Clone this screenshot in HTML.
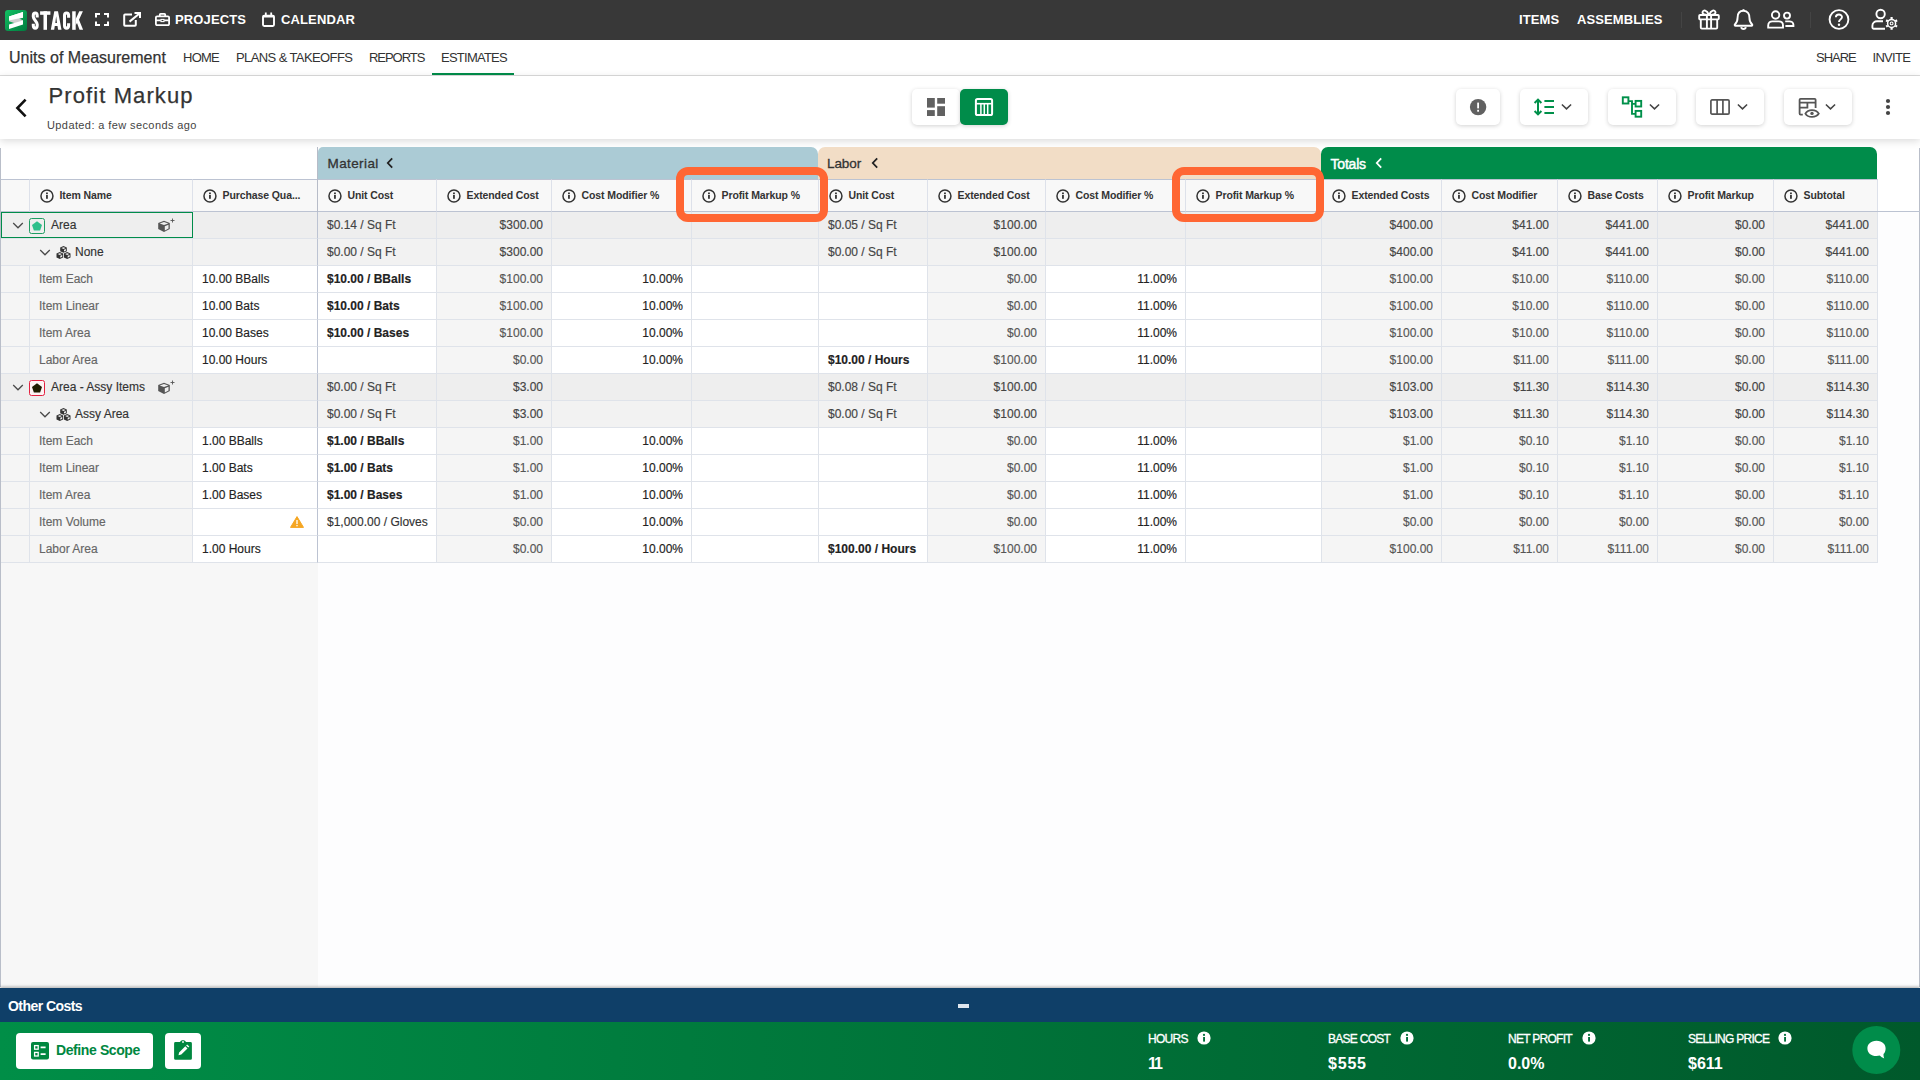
<!DOCTYPE html>
<html lang="en"><head><meta charset="utf-8"><title>Profit Markup - STACK</title>
<style>
*{box-sizing:border-box;margin:0;padding:0}
html,body{width:1920px;height:1080px;overflow:hidden;background:#fff}
body{font-family:"Liberation Sans",sans-serif;color:#333;position:relative;font-size:12px}
svg{display:block}
.abs{position:absolute}
/* top bar */
#topbar{position:absolute;left:0;top:0;width:1920px;height:40px;background:#383838;color:#fff}
#topbar .t{position:absolute;top:12px;font-size:13px;font-weight:700;letter-spacing:.13px;line-height:16px;white-space:nowrap}
#topbar svg{position:absolute}
#topbar .sep{position:absolute;top:12px;width:1px;height:16px;background:#444}
/* sub nav */
#subnav{position:absolute;left:0;top:40px;width:1920px;height:36px;background:#fff;border-bottom:1px solid #dcdcdc}
#subnav span{position:absolute;white-space:nowrap;color:#333}
#subnav .proj{left:9px;top:8px;font-size:16px;line-height:20px;color:#333;-webkit-text-stroke:.25px #333;letter-spacing:.02px}
#subnav .n{top:10px;font-size:13px;line-height:16px;letter-spacing:-.75px}
#subnav .ul{position:absolute;left:432px;top:33px;width:82px;height:2px;background:#008c4a}
/* title bar */
#titlebar{position:absolute;left:0;top:76px;width:1920px;height:63px;background:#fff;box-shadow:0 2px 8px rgba(0,0,0,.15)}
#titlebar .title{position:absolute;left:48.5px;top:6.2px;font-size:22px;line-height:28px;letter-spacing:1.1px;-webkit-text-stroke:.25px #333;color:#333;white-space:nowrap}
#titlebar .upd{position:absolute;left:47px;top:42px;font-size:11px;line-height:14px;letter-spacing:.4px;color:#444;white-space:nowrap}
#titlebar svg{position:absolute}
.tbtn{position:absolute;top:13px;height:36px;background:#fff;border-radius:5px;box-shadow:0 1px 4px rgba(0,0,0,.18)}
.tbtn.on{background:#008c4a}
/* grid */
#grid{position:absolute;left:0;top:0;width:1920px;height:988px;z-index:0}
.leftpane{position:absolute;left:1px;top:563px;width:317px;height:424px;background:#f7f7f7}
.lborder{position:absolute;left:0;top:148px;width:1px;height:839px;background:#b9bec9}
.rborder{position:absolute;left:1919px;top:148px;width:1px;height:839px;background:#b9bec9}
.rpane{position:absolute;left:318px;top:212px;width:1601px;height:775px;background:#fdfdfe}
.gh{position:absolute;top:147px;height:33px;border-radius:7px 7px 0 0;font-size:13.5px}
.pinline{position:absolute;left:317px;top:147px;width:1px;height:415px;background:#b7bcc8}
.gh.mat{background:#abcbd5;border-top-left-radius:5px}
.gh.lab{background:#f2ddc6}
.gh.tot{background:#008c4a;color:#fff}
.gh .ght{position:absolute;left:9.5px;top:9px;line-height:16px;letter-spacing:.4px;-webkit-text-stroke:.3px #333}
.gh.tot .ght{-webkit-text-stroke:.45px #fff;letter-spacing:-.2px;font-size:14px}
.gh .chl{position:absolute;top:10px}
.gh.mat .chl{left:68px}.gh.lab .chl{left:53px}.gh.tot .chl{left:54px}
.gh.lab .ght{letter-spacing:-.1px;left:9px}
.hrow{position:absolute;left:0;top:179px;width:1878px;height:33px;}
.hc{position:absolute;top:0;height:33px;background:#f8f8f8;border-top:1px solid #bcc3d2;border-bottom:1px solid #bcc3d2;border-right:1px solid #dde1ea}
.hc.thick{border-right:1px solid #bcc3d2}
.hc .info{position:absolute;left:9px;top:8px}
.hc .ht{position:absolute;left:29.5px;top:8px;font-size:10.5px;font-weight:700;line-height:14px;white-space:nowrap;color:#333;letter-spacing:-.1px}
.hline{position:absolute;left:1877px;top:211px;width:43px;height:1px;background:#bcc3d2}
.row{position:absolute;left:0;width:1878px;height:27px}
.c{-webkit-text-stroke:.15px currentColor;position:absolute;top:0;height:27px;border-bottom:1px solid #dfe3ea;border-right:1px solid #dfe3ea;background:#fff;font-size:12px;line-height:27px;white-space:nowrap;color:#555}
.c.thick{border-right:1px solid #bcc3d2}
.c .l{position:absolute;left:9px;top:0}
.c .r{position:absolute;right:8px;top:0}
.c .b{font-weight:700;color:#222}
.c .d{color:#333}
.g1 .c{background:#eeeeee;color:#444}
.g2 .c{background:#f2f2f2;color:#444}
.it .c0,.it .c1,.it .c4,.it .c8{background:#f5f5f5}
.it .c2 .l,.it .c5 .r,.it .c9 .r{color:#222}
.it .c11,.it .c12,.it .c13,.it .c14,.it .c15{background:#f5f5f5}
.c1 .nm{position:absolute;top:0;color:#333;font-size:12px}
.namei .nm{color:#666}
.name1,.name2{border-right:1px solid #dfe3ea}
.chd,.ai,.cp,.cb{position:absolute}
.warn{position:absolute;right:13px;top:7px}
.sel{position:absolute;left:1px;top:212px;width:192px;height:26px;border:1px solid #008c4a}
.hl{position:absolute;border:8px solid #ff6633;border-radius:12px}
/* other costs */
#other{position:absolute;left:0;top:988px;width:1920px;height:34px;background:#0f3f68;box-shadow:0 -1px 3px rgba(0,0,0,.35)}
#other .t{position:absolute;left:8px;top:10px;font-size:14px;font-weight:700;line-height:16px;color:#fff;letter-spacing:-.55px}
#other .eq{position:absolute;left:958px;top:16px;width:11px;height:4px;background:linear-gradient(#dfe6ee 0 38%,rgba(255,255,255,.15) 38% 62%,#dfe6ee 62%)}
/* footer */
#footer{position:absolute;left:0;top:1022px;width:1920px;height:58px;background:linear-gradient(90deg,#008e47 0%,#00592b 100%);color:#fff}
#footer .btn{position:absolute;top:11px;height:36px;background:#fff;border-radius:4px}
#footer .lab{position:absolute;top:10px;font-size:12px;line-height:14px;white-space:nowrap;letter-spacing:-.72px;-webkit-text-stroke:.3px #fff}
#footer .val{position:absolute;top:33px;font-size:16px;font-weight:700;line-height:18px;white-space:nowrap}
#footer svg{position:absolute}

</style></head>
<body>
<div id="topbar">
<svg style="left:0;top:0" width="90" height="40" viewBox="0 0 90 40"><defs><linearGradient id="lg" x1="0" y1="0" x2="1" y2="1"><stop offset="0" stop-color="#12c163"/><stop offset="1" stop-color="#007a3e"/></linearGradient></defs><rect x="5" y="10" width="22" height="21" rx="3" fill="url(#lg)"/><path d="M9 16.6 L23 12.1 L23 17.8 L9 21 Z" fill="#fff"/><path d="M9 19.4 L16.5 17.6 L23 20.2 L23 22 L15.5 23.6 L9 21.2 Z" fill="#cfcfcf"/><path d="M9 16.6 L23 12.1 L23 17.4 L9 20.4 Z" fill="#fff"/><path d="M9 24.6 L23 20.6 L23 24.4 L9 28.9 Z" fill="#fff"/><g fill="#fff"><rect x="40.1" y="11.3" width="10.3" height="3.5"/><rect x="43.5" y="11.3" width="3.5" height="18.5"/><path fill-rule="evenodd" d="M50.8 29.8 L54.3 11.3 L58 11.3 L61.5 29.8 L58.1 29.8 L57.5 26 L54.8 26 L54.2 29.8 Z M55.3 23 L57 23 L56.15 16.2 Z"/><rect x="72.2" y="11.3" width="3.5" height="18.5"/><path d="M75.7 19 L79.3 11.3 L82.9 11.3 L79 19.7 L83.1 29.8 L79.5 29.8 L77 23 L75.7 25.2 Z"/></g><g fill="none" stroke="#fff" stroke-width="3.05"><path d="M37.2 17.4 V15.6 C37.2 12.1 33.3 12.1 33.3 15.6 V16.8 C33.3 19.6 37.2 21.4 37.2 24.3 V25.5 C37.2 29 33.3 29 33.3 25.5 V23.7"/><path d="M68.6 17.8 V15.6 C68.6 12.1 64.5 12.1 64.5 15.6 V25.5 C64.5 29 68.6 29 68.6 25.5 V23.2"/></g></svg>
<svg style="left:95px;top:13px" width="14" height="13" viewBox="0 0 14 13" fill="none" stroke="#fff" stroke-width="2"><path d="M1 4.5 V1 H5 M9 1 H13 V4.5 M13 8.5 V12 H9 M5 12 H1 V8.5"/></svg>
<svg style="left:123px;top:12px" width="19" height="15" viewBox="0 0 19 15" fill="none" stroke="#fff" stroke-width="2"><path d="M9 2.6 H2 Q1.2 2.6 1.2 3.4 V13 Q1.2 13.8 2 13.8 H12 Q12.8 13.8 12.8 13 V8"/><path d="M6.5 9.6 L16.5 1.5"/><path d="M11.5 1 H17 V6" stroke-linejoin="miter"/></svg>
<svg style="left:155px;top:13px" width="15" height="13" viewBox="0 0 15 13" fill="none" stroke="#fff" stroke-width="1.8"><rect x="0.9" y="3.3" width="13.2" height="8.9" rx="1.2"/><path d="M4.8 3.3 V1.6 Q4.8 0.9 5.5 0.9 H9.5 Q10.2 0.9 10.2 1.6 V3.3"/><path d="M0.9 7.4 H5.8 M9.2 7.4 H14.1"/><rect x="6" y="6.4" width="3" height="2.2" stroke-width="1.1"/></svg>
<span class="t" style="left:175px">PROJECTS</span>
<svg style="left:262px;top:12px" width="13" height="15" viewBox="0 0 13 15" fill="none" stroke="#fff" stroke-width="1.9"><rect x="1" y="3.6" width="11" height="10.4" rx="1.2"/><path d="M3.8 0.6 V4.4 M9.2 0.6 V4.4" stroke-width="1.8"/><path d="M1 4.4 H12" stroke-width="2.2"/></svg>
<span class="t" style="left:281px">CALENDAR</span>
<span class="t" style="left:1519px">ITEMS</span>
<span class="t" style="left:1577px;letter-spacing:.1px">ASSEMBLIES</span>
<div class="sep" style="left:1681px"></div>
<svg style="left:1698px;top:9px" width="22" height="21" viewBox="0 0 22 21" fill="none" stroke="#fff" stroke-width="1.9"><rect x="1.2" y="6" width="19.6" height="4.4" rx="0.8"/><path d="M2.8 10.4 V18.6 Q2.8 19.6 3.8 19.6 H18.2 Q19.2 19.6 19.2 18.6 V10.4"/><path d="M8.9 6 V19.6 M13.1 6 V19.6"/><path d="M10.8 5.8 C9 1 5.2 0.6 4.6 3 C4 5.2 7 6 10.8 5.8 Z M11.2 5.8 C13 1 16.8 0.6 17.4 3 C18 5.2 15 6 11.2 5.8 Z"/></svg>
<svg style="left:1733px;top:8px" width="21" height="23" viewBox="0 0 21 23" fill="none" stroke="#fff" stroke-width="1.9"><path d="M10.5 1.2 V2.8"/><path d="M10.5 2.8 C6 2.8 4.6 6.4 4.6 9.6 C4.6 13.4 3.4 15 2 16.2 C1.4 16.8 1.6 17.8 2.6 17.8 H18.4 C19.4 17.8 19.6 16.8 19 16.2 C17.6 15 16.4 13.4 16.4 9.6 C16.4 6.4 15 2.8 10.5 2.8 Z"/><path d="M8.2 19.2 C8.6 21.6 12.4 21.6 12.8 19.2"/></svg>
<svg style="left:1767px;top:10px" width="28" height="19" viewBox="0 0 28 19" fill="none" stroke="#fff" stroke-width="1.9"><circle cx="8.6" cy="5" r="3.7"/><path d="M1.2 17.6 V15.4 C1.2 12.6 3.4 11.4 5.4 11.4 H11.8 C13.8 11.4 16 12.6 16 15.4 V17.6 Z"/><circle cx="20" cy="5.6" r="3"/><path d="M18.2 11.4 H22.4 C24.4 11.4 26.4 12.6 26.4 14.8 V16 H18.4"/></svg>
<div class="sep" style="left:1810px"></div>
<svg style="left:1828px;top:9px" width="22" height="22" viewBox="0 0 22 22" fill="none" stroke="#fff" stroke-width="1.9"><circle cx="11" cy="10.5" r="9.4"/><path d="M7.9 8.2 C7.9 4.6 14 4.6 14 8.1 C14 10.4 11 10.4 11 13" stroke-width="1.9"/><circle cx="11" cy="15.8" r="1.2" fill="#fff" stroke="none"/></svg>
<svg style="left:1871px;top:8px" width="29" height="24" viewBox="0 0 29 24" fill="none" stroke="#fff" stroke-width="1.9"><circle cx="9.6" cy="6" r="4.2"/><path d="M14 20.8 H2.6 Q1.4 20.8 1.4 19.6 V17.8 C1.4 14.8 3.8 13.2 6 13.2 H12"/><circle cx="20.6" cy="15.4" r="4" stroke-width="1.5"/><circle cx="20.6" cy="15.4" r="1.4" stroke-width="1.1"/><g stroke-width="2.2" stroke-linecap="butt"><path d="M20.6 9 V11 M20.6 19.8 V21.8 M15.1 12.2 L16.8 13.2 M24.4 17.6 L26.1 18.6 M15.1 18.6 L16.8 17.6 M24.4 13.2 L26.1 12.2"/></g></svg>
</div>
<div id="subnav">
<span class="proj">Units of Measurement</span>
<span class="n" style="left:183px">HOME</span>
<span class="n" style="left:236px;letter-spacing:-.6px">PLANS &amp; TAKEOFFS</span>
<span class="n" style="left:369px;letter-spacing:-1.05px">REPORTS</span>
<span class="n" style="left:441px">ESTIMATES</span>
<div class="ul"></div>
<span class="n" style="left:1816px;letter-spacing:-1px">SHARE</span>
<span class="n" style="left:1872.5px;letter-spacing:-.7px">INVITE</span>
</div>
<div id="titlebar">
<svg style="left:14px;top:22px" width="14" height="20" viewBox="0 0 14 20" fill="none" stroke="#111" stroke-width="2.6"><path d="M11.6 1.6 L3.4 10 L11.6 18.4"/></svg>
<div class="title">Profit Markup</div>
<div class="upd">Updated: a few seconds ago</div>
<div class="tbtn" style="left:912px;width:48px"><svg style="position:absolute;left:15px;top:9px" width="18" height="18" viewBox="0 0 18 18" fill="#616161"><rect x="0" y="0" width="7.8" height="9.6"/><rect x="10.2" y="0" width="7.8" height="5.7"/><rect x="0" y="12.1" width="7.8" height="5.9"/><rect x="10.2" y="8.2" width="7.8" height="9.8"/></svg></div>
<div class="tbtn on" style="left:960px;width:48px"><svg style="position:absolute;left:14px;top:8px" width="20" height="20" viewBox="0 0 20 20" fill="none" stroke="#fff"><rect x="1.9" y="1.9" width="16.2" height="16.2" rx="1.6" stroke-width="2"/><path d="M2 6.7 H18" stroke-width="1.6"/><path d="M6.9 6.7 V18 M10.3 6.7 V18 M13.7 6.7 V18" stroke-width="1.5"/></svg></div>
<div class="tbtn" style="left:1456px;width:44px"><svg style="position:absolute;left:13px;top:9px" width="18" height="18" viewBox="-0.6 -0.6 18 18"><circle cx="8.5" cy="8.5" r="8.2" fill="#616161"/><rect x="7.6" y="4" width="1.8" height="5.8" fill="#fff"/><rect x="7.6" y="11.2" width="1.8" height="1.9" fill="#fff"/></svg></div>
<div class="tbtn" style="left:1520px;width:68px"><svg style="position:absolute;left:13px;top:9px" width="22" height="18" viewBox="0 0 22 18" fill="none" stroke="#00904a" stroke-width="2"><path d="M5 2 V16"/><path d="M1.6 5 L5 1.6 L8.4 5 M1.6 13 L5 16.4 L8.4 13"/><path d="M11.4 3 H21 M11.4 9 H21 M11.4 15 H21" stroke-width="1.9"/></svg><svg style="position:absolute;left:41px;top:14px" width="11" height="8" viewBox="0 -0.6 11 8" fill="none" stroke="#444" stroke-width="1.5"><path d="M0.9 0.9 L5.5 5.3 L10.1 0.9"/></svg></div>
<div class="tbtn" style="left:1608px;width:68px"><svg style="position:absolute;left:13px;top:6px" width="22" height="25" viewBox="0 -0.5 22 25" fill="none" stroke="#00904a" stroke-width="1.9"><rect x="1.8" y="1.8" width="5.6" height="6.2"/><rect x="14.6" y="5.4" width="5.6" height="5.6"/><rect x="14.6" y="15.4" width="5.6" height="5.8"/><path d="M7.4 5.6 H11 V18.4 H14.6 M11 8.4 H14.6"/></svg><svg style="position:absolute;left:41px;top:14px" width="11" height="8" viewBox="0 -0.6 11 8" fill="none" stroke="#444" stroke-width="1.5"><path d="M0.9 0.9 L5.5 5.3 L10.1 0.9"/></svg></div>
<div class="tbtn" style="left:1696px;width:68px"><svg style="position:absolute;left:13px;top:9px" width="22" height="18" viewBox="0 0 22 18" fill="none" stroke="#555" stroke-width="1.7"><rect x="1.9" y="1.9" width="18.2" height="14.2" rx="1.2"/><path d="M8.1 2 V16 M13.9 2 V16"/></svg><svg style="position:absolute;left:41px;top:14px" width="11" height="8" viewBox="0 -0.6 11 8" fill="none" stroke="#444" stroke-width="1.5"><path d="M0.9 0.9 L5.5 5.3 L10.1 0.9"/></svg></div>
<div class="tbtn" style="left:1784px;width:68px"><svg style="position:absolute;left:14px;top:8px" width="22" height="22" viewBox="0 0 22 22" fill="none" stroke="#555" stroke-width="1.8"><path d="M4.8 17.6 H2.6 Q1.6 17.6 1.6 16.6 V2.8 Q1.6 1.8 2.6 1.8 H16.6 Q17.6 1.8 17.6 2.8 V11"/><path d="M1.6 5.6 H17.6 M1.6 10.6 H9.4 M9.4 5.6 V11.4"/><path d="M7.4 16.6 C10 12 18 12 20.8 16.6 C18 21 10 21 7.4 16.6 Z" fill="#fff"/><circle cx="14" cy="16.4" r="1.7" fill="#555" stroke="none"/></svg><svg style="position:absolute;left:41px;top:14px" width="11" height="8" viewBox="0 -0.6 11 8" fill="none" stroke="#444" stroke-width="1.5"><path d="M0.9 0.9 L5.5 5.3 L10.1 0.9"/></svg></div>
<svg style="left:1884px;top:22px" width="8" height="18" viewBox="0 0 8 18" fill="#444"><circle cx="4" cy="3" r="2.1"/><circle cx="4" cy="9" r="2.1"/><circle cx="4" cy="15" r="2.1"/></svg>
</div>

<div id="grid">
<div class="leftpane"></div>
<div class="rpane"></div>
<div class="lborder"></div><div class="rborder"></div>
<div class="gh mat" style="left:318px;width:500px"><span class="ght">Material</span><svg class="chl" width="8" height="12" viewBox="0 0 8 12"><path d="M6.2 1.4 L1.8 6 L6.2 10.6" fill="none" stroke="#222" stroke-width="1.8"/></svg></div>
<div class="gh lab" style="left:818px;width:503px"><span class="ght">Labor</span><svg class="chl" width="8" height="12" viewBox="0 0 8 12"><path d="M6.2 1.4 L1.8 6 L6.2 10.6" fill="none" stroke="#222" stroke-width="1.8"/></svg></div>
<div class="gh tot" style="left:1321px;width:556px"><span class="ght">Totals</span><svg class="chl" width="8" height="12" viewBox="0 0 8 12"><path d="M6.2 1.4 L1.8 6 L6.2 10.6" fill="none" stroke="#fff" stroke-width="1.8"/></svg></div>
<div class="hrow">
<div class="hc" style="left:1px;width:29px"></div>
<div class="hc" style="left:30px;width:163px"><svg class="info" width="16" height="16" viewBox="-0.45 -0.5 16 16"><circle cx="7.5" cy="7.5" r="6" fill="none" stroke="#333" stroke-width="1.5"/><rect x="6.6" y="6.3" width="1.8" height="4" fill="#333"/><rect x="6.6" y="4" width="1.8" height="1.5" fill="#333"/></svg><span class="ht">Item Name</span></div>
<div class="hc thick" style="left:193px;width:125px"><svg class="info" width="16" height="16" viewBox="-0.45 -0.5 16 16"><circle cx="7.5" cy="7.5" r="6" fill="none" stroke="#333" stroke-width="1.5"/><rect x="6.6" y="6.3" width="1.8" height="4" fill="#333"/><rect x="6.6" y="4" width="1.8" height="1.5" fill="#333"/></svg><span class="ht">Purchase Qua...</span></div>
<div class="hc" style="left:318px;width:119px"><svg class="info" width="16" height="16" viewBox="-0.45 -0.5 16 16"><circle cx="7.5" cy="7.5" r="6" fill="none" stroke="#333" stroke-width="1.5"/><rect x="6.6" y="6.3" width="1.8" height="4" fill="#333"/><rect x="6.6" y="4" width="1.8" height="1.5" fill="#333"/></svg><span class="ht">Unit Cost</span></div>
<div class="hc" style="left:437px;width:115px"><svg class="info" width="16" height="16" viewBox="-0.45 -0.5 16 16"><circle cx="7.5" cy="7.5" r="6" fill="none" stroke="#333" stroke-width="1.5"/><rect x="6.6" y="6.3" width="1.8" height="4" fill="#333"/><rect x="6.6" y="4" width="1.8" height="1.5" fill="#333"/></svg><span class="ht">Extended Cost</span></div>
<div class="hc" style="left:552px;width:140px"><svg class="info" width="16" height="16" viewBox="-0.45 -0.5 16 16"><circle cx="7.5" cy="7.5" r="6" fill="none" stroke="#333" stroke-width="1.5"/><rect x="6.6" y="6.3" width="1.8" height="4" fill="#333"/><rect x="6.6" y="4" width="1.8" height="1.5" fill="#333"/></svg><span class="ht">Cost Modifier %</span></div>
<div class="hc" style="left:692px;width:127px"><svg class="info" width="16" height="16" viewBox="-0.45 -0.5 16 16"><circle cx="7.5" cy="7.5" r="6" fill="none" stroke="#333" stroke-width="1.5"/><rect x="6.6" y="6.3" width="1.8" height="4" fill="#333"/><rect x="6.6" y="4" width="1.8" height="1.5" fill="#333"/></svg><span class="ht">Profit Markup %</span></div>
<div class="hc" style="left:819px;width:109px"><svg class="info" width="16" height="16" viewBox="-0.45 -0.5 16 16"><circle cx="7.5" cy="7.5" r="6" fill="none" stroke="#333" stroke-width="1.5"/><rect x="6.6" y="6.3" width="1.8" height="4" fill="#333"/><rect x="6.6" y="4" width="1.8" height="1.5" fill="#333"/></svg><span class="ht">Unit Cost</span></div>
<div class="hc" style="left:928px;width:118px"><svg class="info" width="16" height="16" viewBox="-0.45 -0.5 16 16"><circle cx="7.5" cy="7.5" r="6" fill="none" stroke="#333" stroke-width="1.5"/><rect x="6.6" y="6.3" width="1.8" height="4" fill="#333"/><rect x="6.6" y="4" width="1.8" height="1.5" fill="#333"/></svg><span class="ht">Extended Cost</span></div>
<div class="hc" style="left:1046px;width:140px"><svg class="info" width="16" height="16" viewBox="-0.45 -0.5 16 16"><circle cx="7.5" cy="7.5" r="6" fill="none" stroke="#333" stroke-width="1.5"/><rect x="6.6" y="6.3" width="1.8" height="4" fill="#333"/><rect x="6.6" y="4" width="1.8" height="1.5" fill="#333"/></svg><span class="ht">Cost Modifier %</span></div>
<div class="hc" style="left:1186px;width:136px"><svg class="info" width="16" height="16" viewBox="-0.45 -0.5 16 16"><circle cx="7.5" cy="7.5" r="6" fill="none" stroke="#333" stroke-width="1.5"/><rect x="6.6" y="6.3" width="1.8" height="4" fill="#333"/><rect x="6.6" y="4" width="1.8" height="1.5" fill="#333"/></svg><span class="ht">Profit Markup %</span></div>
<div class="hc" style="left:1322px;width:120px"><svg class="info" width="16" height="16" viewBox="-0.45 -0.5 16 16"><circle cx="7.5" cy="7.5" r="6" fill="none" stroke="#333" stroke-width="1.5"/><rect x="6.6" y="6.3" width="1.8" height="4" fill="#333"/><rect x="6.6" y="4" width="1.8" height="1.5" fill="#333"/></svg><span class="ht">Extended Costs</span></div>
<div class="hc" style="left:1442px;width:116px"><svg class="info" width="16" height="16" viewBox="-0.45 -0.5 16 16"><circle cx="7.5" cy="7.5" r="6" fill="none" stroke="#333" stroke-width="1.5"/><rect x="6.6" y="6.3" width="1.8" height="4" fill="#333"/><rect x="6.6" y="4" width="1.8" height="1.5" fill="#333"/></svg><span class="ht">Cost Modifier</span></div>
<div class="hc" style="left:1558px;width:100px"><svg class="info" width="16" height="16" viewBox="-0.45 -0.5 16 16"><circle cx="7.5" cy="7.5" r="6" fill="none" stroke="#333" stroke-width="1.5"/><rect x="6.6" y="6.3" width="1.8" height="4" fill="#333"/><rect x="6.6" y="4" width="1.8" height="1.5" fill="#333"/></svg><span class="ht">Base Costs</span></div>
<div class="hc" style="left:1658px;width:116px"><svg class="info" width="16" height="16" viewBox="-0.45 -0.5 16 16"><circle cx="7.5" cy="7.5" r="6" fill="none" stroke="#333" stroke-width="1.5"/><rect x="6.6" y="6.3" width="1.8" height="4" fill="#333"/><rect x="6.6" y="4" width="1.8" height="1.5" fill="#333"/></svg><span class="ht">Profit Markup</span></div>
<div class="hc" style="left:1774px;width:104px"><svg class="info" width="16" height="16" viewBox="-0.45 -0.5 16 16"><circle cx="7.5" cy="7.5" r="6" fill="none" stroke="#333" stroke-width="1.5"/><rect x="6.6" y="6.3" width="1.8" height="4" fill="#333"/><rect x="6.6" y="4" width="1.8" height="1.5" fill="#333"/></svg><span class="ht">Subtotal</span></div>
</div>
<div class="hline"></div>
<div class="pinline"></div>
<div class="row g1" style="top:212px">
<div class="c c0" style="left:1px;width:29px"></div>
<div class="c c2 thick" style="left:193px;width:125px"></div>
<div class="c c3" style="left:318px;width:119px"><span class="l">$0.14 / Sq Ft</span></div>
<div class="c c4" style="left:437px;width:115px"><span class="r">$300.00</span></div>
<div class="c c5" style="left:552px;width:140px"></div>
<div class="c c6" style="left:692px;width:127px"></div>
<div class="c c7" style="left:819px;width:109px"><span class="l">$0.05 / Sq Ft</span></div>
<div class="c c8" style="left:928px;width:118px"><span class="r">$100.00</span></div>
<div class="c c9" style="left:1046px;width:140px"></div>
<div class="c c10" style="left:1186px;width:136px"></div>
<div class="c c11" style="left:1322px;width:120px"><span class="r">$400.00</span></div>
<div class="c c12" style="left:1442px;width:116px"><span class="r">$41.00</span></div>
<div class="c c13" style="left:1558px;width:100px"><span class="r">$441.00</span></div>
<div class="c c14" style="left:1658px;width:116px"><span class="r">$0.00</span></div>
<div class="c c15" style="left:1774px;width:104px"><span class="r">$441.00</span></div>
<div class="c c1 name1" style="left:1px;width:192px"><svg class="chd" style="left:11px;top:9px" width="12" height="9" viewBox="0 -0.6 12 9"><path d="M1.2 1.4 L6 6.2 L10.8 1.4" fill="none" stroke="#484848" stroke-width="1.25"/></svg><svg class="ai" style="left:28px;top:6px" width="16" height="16" viewBox="0 0 16 16"><rect x="0.5" y="0.5" width="15" height="15" rx="2" fill="none" stroke="#1f9d63" stroke-width="1"/><path d="M8 3.2 L13 7 L11.1 12.6 L4.9 12.6 L3 7 Z" fill="#2fbf8b"/></svg><span class="nm" style="left:50px">Area</span><svg class="cp" style="left:156px;top:6px" width="19" height="16" viewBox="-0.5 -0.5 19 16"><path d="M6.5 2.2 L12.3 4.4 L12.3 10.6 L6.5 13.6 L0.7 10.6 L0.7 4.4 Z" fill="#555"/><path d="M2.2 5 L6.5 6.6 L10.8 5 L6.5 3.5 Z" fill="#eee"/><path d="M7.3 7.8 L11 6.3 L11 10 L7.3 11.9 Z" fill="#eee"/><path d="M15 0 V4 M13 2 H17" stroke="#555" stroke-width="0.9" fill="none"/></svg></div>
</div>
<div class="row g2" style="top:239px">
<div class="c c0" style="left:1px;width:29px"></div>
<div class="c c2 thick" style="left:193px;width:125px"></div>
<div class="c c3" style="left:318px;width:119px"><span class="l">$0.00 / Sq Ft</span></div>
<div class="c c4" style="left:437px;width:115px"><span class="r">$300.00</span></div>
<div class="c c5" style="left:552px;width:140px"></div>
<div class="c c6" style="left:692px;width:127px"></div>
<div class="c c7" style="left:819px;width:109px"><span class="l">$0.00 / Sq Ft</span></div>
<div class="c c8" style="left:928px;width:118px"><span class="r">$100.00</span></div>
<div class="c c9" style="left:1046px;width:140px"></div>
<div class="c c10" style="left:1186px;width:136px"></div>
<div class="c c11" style="left:1322px;width:120px"><span class="r">$400.00</span></div>
<div class="c c12" style="left:1442px;width:116px"><span class="r">$41.00</span></div>
<div class="c c13" style="left:1558px;width:100px"><span class="r">$441.00</span></div>
<div class="c c14" style="left:1658px;width:116px"><span class="r">$0.00</span></div>
<div class="c c15" style="left:1774px;width:104px"><span class="r">$441.00</span></div>
<div class="c c1 name2" style="left:1px;width:192px"><svg class="chd" style="left:38px;top:9px" width="12" height="9" viewBox="0 -0.6 12 9"><path d="M1.2 1.4 L6 6.2 L10.8 1.4" fill="none" stroke="#484848" stroke-width="1.25"/></svg><svg class="cb" style="left:55px;top:6px" width="15" height="15" viewBox="0 -0.8 15 15"><g fill="#333"><path d="M7.5 0.3 L10.8 1.8 L10.8 5.4 L7.5 7 L4.2 5.4 L4.2 1.8 Z"/><path d="M3.8 6.3 L7.1 7.8 L7.1 11.6 L3.8 13.3 L0.5 11.6 L0.5 7.8 Z"/><path d="M11.2 6.3 L14.5 7.8 L14.5 11.6 L11.2 13.3 L7.9 11.6 L7.9 7.8 Z"/></g><g fill="#f2f2f2"><path d="M5.4 2.2 L7.5 3.1 L9.6 2.2 L7.5 1.4 Z"/><path d="M8 4 L9.9 3.2 L9.9 4.9 L8 5.8 Z"/><path d="M1.7 8.2 L3.8 9.1 L5.9 8.2 L3.8 7.4 Z"/><path d="M4.3 10 L6.2 9.2 L6.2 11 L4.3 12 Z"/><path d="M9.1 8.2 L11.2 9.1 L13.3 8.2 L11.2 7.4 Z"/><path d="M11.7 10 L13.6 9.2 L13.6 11 L11.7 12 Z"/></g></svg><span class="nm" style="left:74px">None</span></div>
</div>
<div class="row it" style="top:266px">
<div class="c c0" style="left:1px;width:29px"></div>
<div class="c c2 thick" style="left:193px;width:125px"><span class="l">10.00 BBalls</span></div>
<div class="c c3" style="left:318px;width:119px"><span class="l b">$10.00 / BBalls</span></div>
<div class="c c4" style="left:437px;width:115px"><span class="r">$100.00</span></div>
<div class="c c5" style="left:552px;width:140px"><span class="r">10.00%</span></div>
<div class="c c6" style="left:692px;width:127px"></div>
<div class="c c7" style="left:819px;width:109px"></div>
<div class="c c8" style="left:928px;width:118px"><span class="r">$0.00</span></div>
<div class="c c9" style="left:1046px;width:140px"><span class="r">11.00%</span></div>
<div class="c c10" style="left:1186px;width:136px"></div>
<div class="c c11" style="left:1322px;width:120px"><span class="r">$100.00</span></div>
<div class="c c12" style="left:1442px;width:116px"><span class="r">$10.00</span></div>
<div class="c c13" style="left:1558px;width:100px"><span class="r">$110.00</span></div>
<div class="c c14" style="left:1658px;width:116px"><span class="r">$0.00</span></div>
<div class="c c15" style="left:1774px;width:104px"><span class="r">$110.00</span></div>
<div class="c c1 namei" style="left:30px;width:163px"><span class="nm" style="left:9px">Item Each</span></div>
</div>
<div class="row it" style="top:293px">
<div class="c c0" style="left:1px;width:29px"></div>
<div class="c c2 thick" style="left:193px;width:125px"><span class="l">10.00 Bats</span></div>
<div class="c c3" style="left:318px;width:119px"><span class="l b">$10.00 / Bats</span></div>
<div class="c c4" style="left:437px;width:115px"><span class="r">$100.00</span></div>
<div class="c c5" style="left:552px;width:140px"><span class="r">10.00%</span></div>
<div class="c c6" style="left:692px;width:127px"></div>
<div class="c c7" style="left:819px;width:109px"></div>
<div class="c c8" style="left:928px;width:118px"><span class="r">$0.00</span></div>
<div class="c c9" style="left:1046px;width:140px"><span class="r">11.00%</span></div>
<div class="c c10" style="left:1186px;width:136px"></div>
<div class="c c11" style="left:1322px;width:120px"><span class="r">$100.00</span></div>
<div class="c c12" style="left:1442px;width:116px"><span class="r">$10.00</span></div>
<div class="c c13" style="left:1558px;width:100px"><span class="r">$110.00</span></div>
<div class="c c14" style="left:1658px;width:116px"><span class="r">$0.00</span></div>
<div class="c c15" style="left:1774px;width:104px"><span class="r">$110.00</span></div>
<div class="c c1 namei" style="left:30px;width:163px"><span class="nm" style="left:9px">Item Linear</span></div>
</div>
<div class="row it" style="top:320px">
<div class="c c0" style="left:1px;width:29px"></div>
<div class="c c2 thick" style="left:193px;width:125px"><span class="l">10.00 Bases</span></div>
<div class="c c3" style="left:318px;width:119px"><span class="l b">$10.00 / Bases</span></div>
<div class="c c4" style="left:437px;width:115px"><span class="r">$100.00</span></div>
<div class="c c5" style="left:552px;width:140px"><span class="r">10.00%</span></div>
<div class="c c6" style="left:692px;width:127px"></div>
<div class="c c7" style="left:819px;width:109px"></div>
<div class="c c8" style="left:928px;width:118px"><span class="r">$0.00</span></div>
<div class="c c9" style="left:1046px;width:140px"><span class="r">11.00%</span></div>
<div class="c c10" style="left:1186px;width:136px"></div>
<div class="c c11" style="left:1322px;width:120px"><span class="r">$100.00</span></div>
<div class="c c12" style="left:1442px;width:116px"><span class="r">$10.00</span></div>
<div class="c c13" style="left:1558px;width:100px"><span class="r">$110.00</span></div>
<div class="c c14" style="left:1658px;width:116px"><span class="r">$0.00</span></div>
<div class="c c15" style="left:1774px;width:104px"><span class="r">$110.00</span></div>
<div class="c c1 namei" style="left:30px;width:163px"><span class="nm" style="left:9px">Item Area</span></div>
</div>
<div class="row it" style="top:347px">
<div class="c c0" style="left:1px;width:29px"></div>
<div class="c c2 thick" style="left:193px;width:125px"><span class="l">10.00 Hours</span></div>
<div class="c c3" style="left:318px;width:119px"></div>
<div class="c c4" style="left:437px;width:115px"><span class="r">$0.00</span></div>
<div class="c c5" style="left:552px;width:140px"><span class="r">10.00%</span></div>
<div class="c c6" style="left:692px;width:127px"></div>
<div class="c c7" style="left:819px;width:109px"><span class="l b">$10.00 / Hours</span></div>
<div class="c c8" style="left:928px;width:118px"><span class="r">$100.00</span></div>
<div class="c c9" style="left:1046px;width:140px"><span class="r">11.00%</span></div>
<div class="c c10" style="left:1186px;width:136px"></div>
<div class="c c11" style="left:1322px;width:120px"><span class="r">$100.00</span></div>
<div class="c c12" style="left:1442px;width:116px"><span class="r">$11.00</span></div>
<div class="c c13" style="left:1558px;width:100px"><span class="r">$111.00</span></div>
<div class="c c14" style="left:1658px;width:116px"><span class="r">$0.00</span></div>
<div class="c c15" style="left:1774px;width:104px"><span class="r">$111.00</span></div>
<div class="c c1 namei" style="left:30px;width:163px"><span class="nm" style="left:9px">Labor Area</span></div>
</div>
<div class="row g1" style="top:374px">
<div class="c c0" style="left:1px;width:29px"></div>
<div class="c c2 thick" style="left:193px;width:125px"></div>
<div class="c c3" style="left:318px;width:119px"><span class="l">$0.00 / Sq Ft</span></div>
<div class="c c4" style="left:437px;width:115px"><span class="r">$3.00</span></div>
<div class="c c5" style="left:552px;width:140px"></div>
<div class="c c6" style="left:692px;width:127px"></div>
<div class="c c7" style="left:819px;width:109px"><span class="l">$0.08 / Sq Ft</span></div>
<div class="c c8" style="left:928px;width:118px"><span class="r">$100.00</span></div>
<div class="c c9" style="left:1046px;width:140px"></div>
<div class="c c10" style="left:1186px;width:136px"></div>
<div class="c c11" style="left:1322px;width:120px"><span class="r">$103.00</span></div>
<div class="c c12" style="left:1442px;width:116px"><span class="r">$11.30</span></div>
<div class="c c13" style="left:1558px;width:100px"><span class="r">$114.30</span></div>
<div class="c c14" style="left:1658px;width:116px"><span class="r">$0.00</span></div>
<div class="c c15" style="left:1774px;width:104px"><span class="r">$114.30</span></div>
<div class="c c1 name1" style="left:1px;width:192px"><svg class="chd" style="left:11px;top:9px" width="12" height="9" viewBox="0 -0.6 12 9"><path d="M1.2 1.4 L6 6.2 L10.8 1.4" fill="none" stroke="#484848" stroke-width="1.25"/></svg><svg class="ai" style="left:28px;top:6px" width="16" height="16" viewBox="0 0 16 16"><rect x="0.5" y="0.5" width="15" height="15" rx="2" fill="#fdf3f4" stroke="#e3203f" stroke-width="1"/><path d="M8 3.2 L13 7 L11.1 12.6 L4.9 12.6 L3 7 Z" fill="#1d1d00"/></svg><span class="nm" style="left:50px">Area - Assy Items</span><svg class="cp" style="left:156px;top:6px" width="19" height="16" viewBox="-0.5 -0.5 19 16"><path d="M6.5 2.2 L12.3 4.4 L12.3 10.6 L6.5 13.6 L0.7 10.6 L0.7 4.4 Z" fill="#555"/><path d="M2.2 5 L6.5 6.6 L10.8 5 L6.5 3.5 Z" fill="#eee"/><path d="M7.3 7.8 L11 6.3 L11 10 L7.3 11.9 Z" fill="#eee"/><path d="M15 0 V4 M13 2 H17" stroke="#555" stroke-width="0.9" fill="none"/></svg></div>
</div>
<div class="row g2" style="top:401px">
<div class="c c0" style="left:1px;width:29px"></div>
<div class="c c2 thick" style="left:193px;width:125px"></div>
<div class="c c3" style="left:318px;width:119px"><span class="l">$0.00 / Sq Ft</span></div>
<div class="c c4" style="left:437px;width:115px"><span class="r">$3.00</span></div>
<div class="c c5" style="left:552px;width:140px"></div>
<div class="c c6" style="left:692px;width:127px"></div>
<div class="c c7" style="left:819px;width:109px"><span class="l">$0.00 / Sq Ft</span></div>
<div class="c c8" style="left:928px;width:118px"><span class="r">$100.00</span></div>
<div class="c c9" style="left:1046px;width:140px"></div>
<div class="c c10" style="left:1186px;width:136px"></div>
<div class="c c11" style="left:1322px;width:120px"><span class="r">$103.00</span></div>
<div class="c c12" style="left:1442px;width:116px"><span class="r">$11.30</span></div>
<div class="c c13" style="left:1558px;width:100px"><span class="r">$114.30</span></div>
<div class="c c14" style="left:1658px;width:116px"><span class="r">$0.00</span></div>
<div class="c c15" style="left:1774px;width:104px"><span class="r">$114.30</span></div>
<div class="c c1 name2" style="left:1px;width:192px"><svg class="chd" style="left:38px;top:9px" width="12" height="9" viewBox="0 -0.6 12 9"><path d="M1.2 1.4 L6 6.2 L10.8 1.4" fill="none" stroke="#484848" stroke-width="1.25"/></svg><svg class="cb" style="left:55px;top:6px" width="15" height="15" viewBox="0 -0.8 15 15"><g fill="#333"><path d="M7.5 0.3 L10.8 1.8 L10.8 5.4 L7.5 7 L4.2 5.4 L4.2 1.8 Z"/><path d="M3.8 6.3 L7.1 7.8 L7.1 11.6 L3.8 13.3 L0.5 11.6 L0.5 7.8 Z"/><path d="M11.2 6.3 L14.5 7.8 L14.5 11.6 L11.2 13.3 L7.9 11.6 L7.9 7.8 Z"/></g><g fill="#f2f2f2"><path d="M5.4 2.2 L7.5 3.1 L9.6 2.2 L7.5 1.4 Z"/><path d="M8 4 L9.9 3.2 L9.9 4.9 L8 5.8 Z"/><path d="M1.7 8.2 L3.8 9.1 L5.9 8.2 L3.8 7.4 Z"/><path d="M4.3 10 L6.2 9.2 L6.2 11 L4.3 12 Z"/><path d="M9.1 8.2 L11.2 9.1 L13.3 8.2 L11.2 7.4 Z"/><path d="M11.7 10 L13.6 9.2 L13.6 11 L11.7 12 Z"/></g></svg><span class="nm" style="left:74px">Assy Area</span></div>
</div>
<div class="row it" style="top:428px">
<div class="c c0" style="left:1px;width:29px"></div>
<div class="c c2 thick" style="left:193px;width:125px"><span class="l">1.00 BBalls</span></div>
<div class="c c3" style="left:318px;width:119px"><span class="l b">$1.00 / BBalls</span></div>
<div class="c c4" style="left:437px;width:115px"><span class="r">$1.00</span></div>
<div class="c c5" style="left:552px;width:140px"><span class="r">10.00%</span></div>
<div class="c c6" style="left:692px;width:127px"></div>
<div class="c c7" style="left:819px;width:109px"></div>
<div class="c c8" style="left:928px;width:118px"><span class="r">$0.00</span></div>
<div class="c c9" style="left:1046px;width:140px"><span class="r">11.00%</span></div>
<div class="c c10" style="left:1186px;width:136px"></div>
<div class="c c11" style="left:1322px;width:120px"><span class="r">$1.00</span></div>
<div class="c c12" style="left:1442px;width:116px"><span class="r">$0.10</span></div>
<div class="c c13" style="left:1558px;width:100px"><span class="r">$1.10</span></div>
<div class="c c14" style="left:1658px;width:116px"><span class="r">$0.00</span></div>
<div class="c c15" style="left:1774px;width:104px"><span class="r">$1.10</span></div>
<div class="c c1 namei" style="left:30px;width:163px"><span class="nm" style="left:9px">Item Each</span></div>
</div>
<div class="row it" style="top:455px">
<div class="c c0" style="left:1px;width:29px"></div>
<div class="c c2 thick" style="left:193px;width:125px"><span class="l">1.00 Bats</span></div>
<div class="c c3" style="left:318px;width:119px"><span class="l b">$1.00 / Bats</span></div>
<div class="c c4" style="left:437px;width:115px"><span class="r">$1.00</span></div>
<div class="c c5" style="left:552px;width:140px"><span class="r">10.00%</span></div>
<div class="c c6" style="left:692px;width:127px"></div>
<div class="c c7" style="left:819px;width:109px"></div>
<div class="c c8" style="left:928px;width:118px"><span class="r">$0.00</span></div>
<div class="c c9" style="left:1046px;width:140px"><span class="r">11.00%</span></div>
<div class="c c10" style="left:1186px;width:136px"></div>
<div class="c c11" style="left:1322px;width:120px"><span class="r">$1.00</span></div>
<div class="c c12" style="left:1442px;width:116px"><span class="r">$0.10</span></div>
<div class="c c13" style="left:1558px;width:100px"><span class="r">$1.10</span></div>
<div class="c c14" style="left:1658px;width:116px"><span class="r">$0.00</span></div>
<div class="c c15" style="left:1774px;width:104px"><span class="r">$1.10</span></div>
<div class="c c1 namei" style="left:30px;width:163px"><span class="nm" style="left:9px">Item Linear</span></div>
</div>
<div class="row it" style="top:482px">
<div class="c c0" style="left:1px;width:29px"></div>
<div class="c c2 thick" style="left:193px;width:125px"><span class="l">1.00 Bases</span></div>
<div class="c c3" style="left:318px;width:119px"><span class="l b">$1.00 / Bases</span></div>
<div class="c c4" style="left:437px;width:115px"><span class="r">$1.00</span></div>
<div class="c c5" style="left:552px;width:140px"><span class="r">10.00%</span></div>
<div class="c c6" style="left:692px;width:127px"></div>
<div class="c c7" style="left:819px;width:109px"></div>
<div class="c c8" style="left:928px;width:118px"><span class="r">$0.00</span></div>
<div class="c c9" style="left:1046px;width:140px"><span class="r">11.00%</span></div>
<div class="c c10" style="left:1186px;width:136px"></div>
<div class="c c11" style="left:1322px;width:120px"><span class="r">$1.00</span></div>
<div class="c c12" style="left:1442px;width:116px"><span class="r">$0.10</span></div>
<div class="c c13" style="left:1558px;width:100px"><span class="r">$1.10</span></div>
<div class="c c14" style="left:1658px;width:116px"><span class="r">$0.00</span></div>
<div class="c c15" style="left:1774px;width:104px"><span class="r">$1.10</span></div>
<div class="c c1 namei" style="left:30px;width:163px"><span class="nm" style="left:9px">Item Area</span></div>
</div>
<div class="row it" style="top:509px">
<div class="c c0" style="left:1px;width:29px"></div>
<div class="c c2 thick" style="left:193px;width:125px"><svg class="warn" width="14" height="12" viewBox="0 0 14 12"><path d="M7 0.6 L13.5 11.4 L0.5 11.4 Z" fill="#f5a623" stroke="#f5a623" stroke-width="1" stroke-linejoin="round"/><rect x="6.35" y="4" width="1.3" height="4" fill="#fff"/><rect x="6.35" y="8.9" width="1.3" height="1.4" fill="#fff"/></svg></div>
<div class="c c3" style="left:318px;width:119px"><span class="l d">$1,000.00 / Gloves</span></div>
<div class="c c4" style="left:437px;width:115px"><span class="r">$0.00</span></div>
<div class="c c5" style="left:552px;width:140px"><span class="r">10.00%</span></div>
<div class="c c6" style="left:692px;width:127px"></div>
<div class="c c7" style="left:819px;width:109px"></div>
<div class="c c8" style="left:928px;width:118px"><span class="r">$0.00</span></div>
<div class="c c9" style="left:1046px;width:140px"><span class="r">11.00%</span></div>
<div class="c c10" style="left:1186px;width:136px"></div>
<div class="c c11" style="left:1322px;width:120px"><span class="r">$0.00</span></div>
<div class="c c12" style="left:1442px;width:116px"><span class="r">$0.00</span></div>
<div class="c c13" style="left:1558px;width:100px"><span class="r">$0.00</span></div>
<div class="c c14" style="left:1658px;width:116px"><span class="r">$0.00</span></div>
<div class="c c15" style="left:1774px;width:104px"><span class="r">$0.00</span></div>
<div class="c c1 namei" style="left:30px;width:163px"><span class="nm" style="left:9px">Item Volume</span></div>
</div>
<div class="row it" style="top:536px">
<div class="c c0" style="left:1px;width:29px"></div>
<div class="c c2 thick" style="left:193px;width:125px"><span class="l">1.00 Hours</span></div>
<div class="c c3" style="left:318px;width:119px"></div>
<div class="c c4" style="left:437px;width:115px"><span class="r">$0.00</span></div>
<div class="c c5" style="left:552px;width:140px"><span class="r">10.00%</span></div>
<div class="c c6" style="left:692px;width:127px"></div>
<div class="c c7" style="left:819px;width:109px"><span class="l b">$100.00 / Hours</span></div>
<div class="c c8" style="left:928px;width:118px"><span class="r">$100.00</span></div>
<div class="c c9" style="left:1046px;width:140px"><span class="r">11.00%</span></div>
<div class="c c10" style="left:1186px;width:136px"></div>
<div class="c c11" style="left:1322px;width:120px"><span class="r">$100.00</span></div>
<div class="c c12" style="left:1442px;width:116px"><span class="r">$11.00</span></div>
<div class="c c13" style="left:1558px;width:100px"><span class="r">$111.00</span></div>
<div class="c c14" style="left:1658px;width:116px"><span class="r">$0.00</span></div>
<div class="c c15" style="left:1774px;width:104px"><span class="r">$111.00</span></div>
<div class="c c1 namei" style="left:30px;width:163px"><span class="nm" style="left:9px">Labor Area</span></div>
</div>
<div class="sel"></div>
<div class="hl" style="left:676px;top:167px;width:152px;height:55px"></div>
<div class="hl" style="left:1172px;top:167px;width:152px;height:55px"></div>
</div>
<div id="other"><span class="t">Other Costs</span><div class="eq"></div></div>
<div id="footer">
<div class="btn" style="left:16px;width:137px"><svg style="left:15px;top:9px" width="18" height="18" viewBox="0 0 18 18"><rect x="0" y="0" width="18" height="17.4" rx="2" fill="#00873f"/><g fill="none" stroke="#fff" stroke-width="1.3"><rect x="3.6" y="3.6" width="3.6" height="3.6"/><rect x="3.6" y="10.4" width="3.6" height="3.6"/><path d="M9.6 5.4 H14.6 M9.6 12.2 H14.6" stroke-width="1.7"/></g></svg><span style="position:absolute;left:40px;top:9px;font-size:14px;font-weight:700;color:#00873f;line-height:16px;letter-spacing:-.4px;white-space:nowrap">Define Scope</span></div>
<div class="btn" style="left:165px;width:36px"><svg style="left:9px;top:7px" width="19" height="21" viewBox="0.5 0.6 19 21"><path d="M2 2.6 H6.6 C7 0.2 12 0.2 12.4 2.6 H17 Q18.4 2.6 18.4 4 V19 Q18.4 20.4 17 20.4 H2 Q0.6 20.4 0.6 19 V4 Q0.6 2.6 2 2.6 Z" fill="#00873f"/><circle cx="9.5" cy="2.6" r="0.9" fill="#fff"/><path d="M5 15.8 L5.6 13 L11.8 6.8 L14 9 L7.8 15.2 Z M12.6 6 L13.6 5 L15.8 7.2 L14.8 8.2 Z" fill="#fff"/></svg></div>
<span class="lab" style="left:1148px">HOURS</span><svg style="left:1197px;top:9px" width="14" height="14" viewBox="0 0 14 14"><circle cx="7" cy="7" r="6.6" fill="#fff"/><rect x="6.1" y="6" width="1.9" height="4.6" fill="#00703a"/><circle cx="7" cy="3.9" r="1.1" fill="#00703a"/></svg>
<span class="val" style="left:1148px;letter-spacing:-2px">11</span>
<span class="lab" style="left:1328px">BASE COST</span><svg style="left:1400px;top:9px" width="14" height="14" viewBox="0 0 14 14"><circle cx="7" cy="7" r="6.6" fill="#fff"/><rect x="6.1" y="6" width="1.9" height="4.6" fill="#00703a"/><circle cx="7" cy="3.9" r="1.1" fill="#00703a"/></svg>
<span class="val" style="left:1328px;letter-spacing:.8px">$555</span>
<span class="lab" style="left:1508px">NET PROFIT</span><svg style="left:1582px;top:9px" width="14" height="14" viewBox="0 0 14 14"><circle cx="7" cy="7" r="6.6" fill="#fff"/><rect x="6.1" y="6" width="1.9" height="4.6" fill="#00703a"/><circle cx="7" cy="3.9" r="1.1" fill="#00703a"/></svg>
<span class="val" style="left:1508px">0.0%</span>
<span class="lab" style="left:1688px">SELLING PRICE</span><svg style="left:1778px;top:9px" width="14" height="14" viewBox="0 0 14 14"><circle cx="7" cy="7" r="6.6" fill="#fff"/><rect x="6.1" y="6" width="1.9" height="4.6" fill="#00703a"/><circle cx="7" cy="3.9" r="1.1" fill="#00703a"/></svg>
<span class="val" style="left:1688px">$611</span>
<svg style="left:1850px;top:2px" width="54" height="54" viewBox="0 0 54 54"><circle cx="26.3" cy="26" r="24" fill="#008c4a"/><path d="M26.5 16.8 C20.4 16.8 17.4 20.6 17.4 24.4 C17.4 28.6 21 32 26.5 32 C27.6 32 28.6 31.9 29.6 31.6 C30.8 32.6 32.6 34 34.2 34.4 C33.6 33 33.4 31.4 33.5 30 C35 28.6 35.6 26.6 35.6 24.4 C35.6 20.6 32.6 16.8 26.5 16.8 Z" fill="#fff"/></svg>
</div>

</body></html>
